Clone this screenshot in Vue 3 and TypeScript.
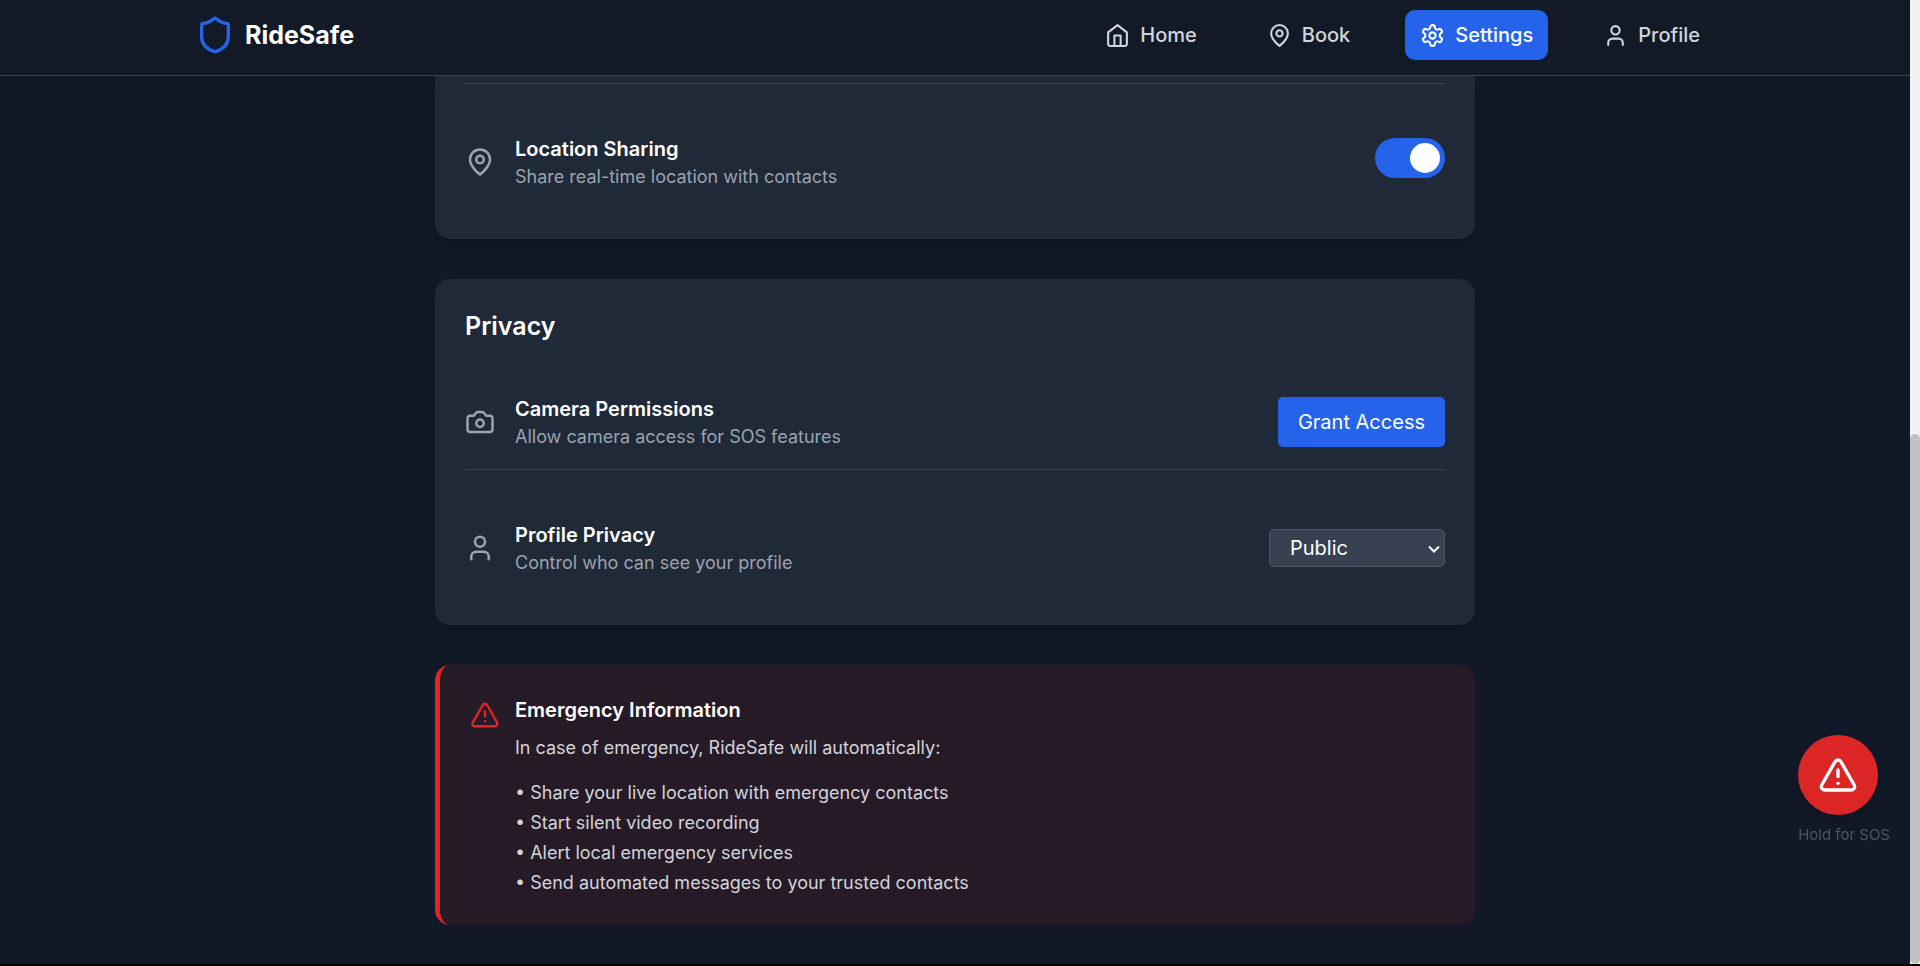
<script lang="ts">
import { h } from 'vue'
</script>

<script setup lang="ts">
import { ref } from 'vue'

interface Shape {
  d?: string
  circle?: [number, number, number]
}

const icons: Record<string, Shape[]> = {
  shield: [
    {
      d: 'M20 13c0 5-3.5 7.5-7.66 8.95a1 1 0 0 1-.67-.01C7.5 20.5 4 18 4 13V6a1 1 0 0 1 1-1c2 0 4.5-1.2 6.24-2.72a1.17 1.17 0 0 1 1.52 0C14.51 3.81 17 5 19 5a1 1 0 0 1 1 1z',
    },
  ],
  home: [{ d: 'm3 9 9-7 9 7v11a2 2 0 0 1-2 2H5a2 2 0 0 1-2-2z' }, { d: 'M9 22V12h6v10' }],
  pin: [{ d: 'M20 10c0 6-8 12-8 12s-8-6-8-12a8 8 0 0 1 16 0Z' }, { circle: [12, 10, 3] }],
  settings: [
    {
      d: 'M12.22 2h-.44a2 2 0 0 0-2 2v.18a2 2 0 0 1-1 1.73l-.43.25a2 2 0 0 1-2 0l-.15-.08a2 2 0 0 0-2.73.73l-.22.38a2 2 0 0 0 .73 2.73l.15.1a2 2 0 0 1 1 1.72v.51a2 2 0 0 1-1 1.74l-.15.09a2 2 0 0 0-.73 2.73l.22.38a2 2 0 0 0 2.73.73l.15-.08a2 2 0 0 1 2 0l.43.25a2 2 0 0 1 1 1.73V20a2 2 0 0 0 2 2h.44a2 2 0 0 0 2-2v-.18a2 2 0 0 1 1-1.73l.43-.25a2 2 0 0 1 2 0l.15.08a2 2 0 0 0 2.73-.73l.22-.39a2 2 0 0 0-.73-2.73l-.15-.08a2 2 0 0 1-1-1.74v-.5a2 2 0 0 1 1-1.74l.15-.09a2 2 0 0 0 .73-2.73l-.22-.38a2 2 0 0 0-2.73-.73l-.15.08a2 2 0 0 1-2 0l-.43-.25a2 2 0 0 1-1-1.73V4a2 2 0 0 0-2-2z',
    },
    { circle: [12, 12, 3] },
  ],
  user: [{ d: 'M19 21v-2a4 4 0 0 0-4-4H9a4 4 0 0 0-4 4v2' }, { circle: [12, 7, 4] }],
  camera: [
    {
      d: 'M14.5 4h-5L7 7H4a2 2 0 0 0-2 2v9a2 2 0 0 0 2 2h16a2 2 0 0 0 2-2V9a2 2 0 0 0-2-2h-3l-2.5-3z',
    },
    { circle: [12, 13, 3] },
  ],
  alert: [
    { d: 'm21.73 18-8-14a2 2 0 0 0-3.48 0l-8 14A2 2 0 0 0 4 21h16a2 2 0 0 0 1.73-3Z' },
    { d: 'M12 9v4' },
    { d: 'M12 17h.01' },
  ],
}

const Icon = (props: { name: string }) =>
  h(
    'svg',
    {
      viewBox: '0 0 24 24',
      fill: 'none',
      stroke: 'currentColor',
      'stroke-width': 2,
      'stroke-linecap': 'round',
      'stroke-linejoin': 'round',
      'aria-hidden': 'true',
    },
    icons[props.name].map((s) =>
      s.circle
        ? h('circle', { cx: s.circle[0], cy: s.circle[1], r: s.circle[2] })
        : h('path', { d: s.d }),
    ),
  )
Icon.props = ['name']

const links = [
  { label: 'Home', icon: 'home' },
  { label: 'Book', icon: 'pin' },
  { label: 'Settings', icon: 'settings' },
  { label: 'Profile', icon: 'user' },
]
const active = ref('Settings')

const sharing = ref(true)
const privacy = ref('public')

const actions = [
  'Share your live location with emergency contacts',
  'Start silent video recording',
  'Alert local emergency services',
  'Send automated messages to your trusted contacts',
]
</script>

<template>
  <div class="page">
    <header class="topbar">
      <div class="topbar-inner">
        <a class="brand" href="#"><Icon class="brand-icon" name="shield" />RideSafe</a>
        <nav class="nav" aria-label="Main">
          <a
            v-for="link in links"
            :key="link.label"
            href="#"
            class="nav-link"
            :class="{ active: link.label === active }"
            @click.prevent="active = link.label"
          >
            <Icon class="nav-icon" :name="link.icon" />{{ link.label }}
          </a>
        </nav>
      </div>
    </header>

    <main class="content">
      <section class="card card-continued">
        <div class="row">
          <Icon class="row-icon" name="pin" />
          <div class="row-text">
            <label class="row-title" for="sharing">Location Sharing</label>
            <p class="row-note">Share real-time location with contacts</p>
          </div>
          <input id="sharing" v-model="sharing" class="switch" type="checkbox" />
        </div>
      </section>

      <section class="card">
        <h2 class="card-title">Privacy</h2>
        <div class="row row-divided">
          <Icon class="row-icon" name="camera" />
          <div class="row-text">
            <h3 class="row-title">Camera Permissions</h3>
            <p class="row-note">Allow camera access for SOS features</p>
          </div>
          <button class="grant" type="button">Grant Access</button>
        </div>
        <div class="row">
          <Icon class="row-icon" name="user" />
          <div class="row-text">
            <label class="row-title" for="privacy">Profile Privacy</label>
            <p class="row-note">Control who can see your profile</p>
          </div>
          <div class="select-wrap">
            <select id="privacy" v-model="privacy" class="select">
              <option value="public">Public</option>
              <option value="private">Private</option>
              <option value="contacts">Contacts</option>
            </select>
            <svg class="select-arrow" viewBox="0 0 12 8" aria-hidden="true">
              <path d="M1 1.5l5 5 5-5" fill="none" stroke="currentColor" stroke-width="2" />
            </svg>
          </div>
        </div>
      </section>

      <section class="notice">
        <Icon class="notice-icon" name="alert" />
        <div>
          <h3 class="row-title">Emergency Information</h3>
          <p class="notice-lead">In case of emergency, RideSafe will automatically:</p>
          <ul class="notice-list">
            <li v-for="item in actions" :key="item">• {{ item }}</li>
          </ul>
        </div>
      </section>
    </main>

    <div class="sos">
      <button class="sos-button" type="button" aria-labelledby="sos-label">
        <Icon class="sos-icon" name="alert" />
      </button>
      <span id="sos-label" class="sos-label">Hold for SOS</span>
    </div>

    <div class="scroll-track" aria-hidden="true"><div class="scroll-thumb"></div></div>
  </div>
</template>

<style>
body {
  margin: 0;
  background: #000;
}
</style>

<style scoped>
.page {
  box-sizing: border-box;
  position: relative;
  min-height: calc(100vh - 2px);
  padding-right: 10px;
  background: #111827;
  color: #fff;
  font-family: Inter, 'Liberation Sans', sans-serif;
  font-size: 20px;
  line-height: 30px;
}

h2,
h3,
p,
ul {
  margin: 0;
  padding: 0;
}

.topbar {
  position: relative;
  background: #121a28;
  border-bottom: 1px solid #374151;
}

.topbar-inner {
  box-sizing: border-box;
  display: flex;
  align-items: center;
  justify-content: space-between;
  max-width: 1600px;
  margin: 0 auto;
  padding: 10px 40px 15px;
}

.brand {
  display: flex;
  align-items: center;
  gap: 10px;
  color: #fff;
  font-size: 25px;
  font-weight: 700;
  text-decoration: none;
}

.brand-icon {
  width: 40px;
  height: 40px;
  color: #2563eb;
}

.nav {
  display: flex;
  gap: 40px;
}

.nav-link {
  display: flex;
  align-items: center;
  gap: 10px;
  padding: 10px 15px;
  border-radius: 10px;
  color: #d1d5db;
  font-weight: 500;
  text-decoration: none;
}

.nav-link.active {
  background: #2563eb;
  color: #fff;
}

.nav-icon {
  width: 25px;
  height: 25px;
}

.content {
  display: flex;
  flex-direction: column;
  gap: 40px;
  max-width: 1040px;
  margin: 0 auto;
}

.card {
  display: flex;
  flex-direction: column;
  gap: 30px;
  padding: 30px;
  border-radius: 15px;
  background: #1f2937;
  box-shadow: 0 12px 18px -4px rgba(0, 0, 0, 0.1), 0 5px 8px -5px rgba(0, 0, 0, 0.1);
}

.card-continued {
  padding-top: 7px;
  border-radius: 0 0 15px 15px;
}

.card-continued::before {
  content: '';
  height: 1px;
  background: #374151;
}

.card-title {
  font-size: 25px;
  font-weight: 600;
  line-height: 35px;
}

.row {
  display: flex;
  align-items: center;
  gap: 20px;
  padding: 20px 0;
}

.row-divided {
  border-bottom: 1px solid #374151;
}

.row-icon {
  flex: none;
  width: 30px;
  height: 30px;
  color: #9ca3af;
}

.row-text {
  flex: 1;
}

.row-title {
  display: block;
  font-size: 20px;
  font-weight: 600;
  line-height: 30px;
}

.row-note {
  color: #9ca3af;
  font-size: 18px;
  line-height: 25px;
}

.switch {
  appearance: none;
  display: flex;
  box-sizing: border-box;
  width: 70px;
  height: 40px;
  margin: 0 0 8px;
  padding: 5px;
  border-radius: 20px;
  background: #4b5563;
  cursor: pointer;
}

.switch::before {
  content: '';
  width: 30px;
  height: 30px;
  border-radius: 50%;
  background: #fff;
}

.switch:checked {
  justify-content: flex-end;
  background: #2563eb;
}

.grant {
  padding: 10px 20px;
  border: 0;
  border-radius: 5px;
  background: #2563eb;
  color: #fff;
  font: inherit;
  cursor: pointer;
}

.select-wrap {
  position: relative;
  display: flex;
}

.select {
  appearance: none;
  width: 176px;
  height: 38px;
  padding: 0 20px;
  border: 1px solid #4b5563;
  border-radius: 5px;
  background: #374151;
  color: #fff;
  font: inherit;
}

.select-arrow {
  position: absolute;
  top: 16px;
  right: 5px;
  width: 12px;
  height: 8px;
  pointer-events: none;
}

.notice {
  display: flex;
  align-items: flex-start;
  gap: 15px;
  padding: 30px;
  border-left: 5px solid #dc2626;
  border-radius: 15px;
  background: #271a27;
}

.notice-icon {
  flex: none;
  width: 30px;
  height: 30px;
  margin-top: 5px;
  color: #dc2626;
}

.notice-lead,
.notice-list {
  color: #d1d5db;
  font-size: 18px;
  line-height: 25px;
}

.notice-lead {
  margin: 10px 0 20px;
}

.notice-list {
  display: flex;
  flex-direction: column;
  gap: 5px;
  list-style: none;
}

.sos {
  position: fixed;
  right: 30px;
  bottom: 121px;
  display: flex;
  flex-direction: column;
  align-items: flex-start;
  gap: 10px;
}

.sos-button {
  display: flex;
  align-items: center;
  justify-content: center;
  width: 80px;
  height: 80px;
  padding: 0;
  border: 0;
  border-radius: 50%;
  background: #dc2626;
  color: #fff;
  box-shadow: 0 12px 18px -4px rgba(0, 0, 0, 0.1), 0 5px 8px -5px rgba(0, 0, 0, 0.1);
  cursor: pointer;
}

.sos-icon {
  width: 40px;
  height: 40px;
}

.sos-label {
  color: #4b5563;
  font-size: 15px;
  line-height: 20px;
}

.scroll-track {
  position: absolute;
  top: 0;
  right: 0;
  bottom: 0;
  display: flex;
  align-items: flex-end;
  width: 10px;
  background: #f1f1f1;
}

.scroll-thumb {
  width: 100%;
  height: 55%;
  border-radius: 5px;
  background: #c1c1c1;
}
</style>
